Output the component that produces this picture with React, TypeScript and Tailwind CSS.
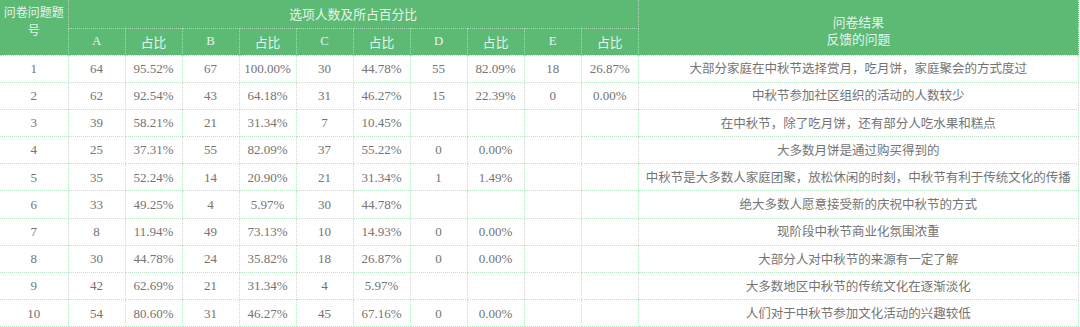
import React from "react";

type Row = { n: string; cells: string[]; text: string };

const rows: Row[] = [
  { n: "1", cells: ["64", "95.52%", "67", "100.00%", "30", "44.78%", "55", "82.09%", "18", "26.87%"], text: "大部分家庭在中秋节选择赏月，吃月饼，家庭聚会的方式度过" },
  { n: "2", cells: ["62", "92.54%", "43", "64.18%", "31", "46.27%", "15", "22.39%", "0", "0.00%"], text: "中秋节参加社区组织的活动的人数较少" },
  { n: "3", cells: ["39", "58.21%", "21", "31.34%", "7", "10.45%", "", "", "", ""], text: "在中秋节，除了吃月饼，还有部分人吃水果和糕点" },
  { n: "4", cells: ["25", "37.31%", "55", "82.09%", "37", "55.22%", "0", "0.00%", "", ""], text: "大多数月饼是通过购买得到的" },
  { n: "5", cells: ["35", "52.24%", "14", "20.90%", "21", "31.34%", "1", "1.49%", "", ""], text: "中秋节是大多数人家庭团聚，放松休闲的时刻，中秋节有利于传统文化的传播" },
  { n: "6", cells: ["33", "49.25%", "4", "5.97%", "30", "44.78%", "", "", "", ""], text: "绝大多数人愿意接受新的庆祝中秋节的方式" },
  { n: "7", cells: ["8", "11.94%", "49", "73.13%", "10", "14.93%", "0", "0.00%", "", ""], text: "现阶段中秋节商业化氛围浓重" },
  { n: "8", cells: ["30", "44.78%", "24", "35.82%", "18", "26.87%", "0", "0.00%", "", ""], text: "大部分人对中秋节的来源有一定了解" },
  { n: "9", cells: ["42", "62.69%", "21", "31.34%", "4", "5.97%", "", "", "", ""], text: "大多数地区中秋节的传统文化在逐渐淡化" },
  { n: "10", cells: ["54", "80.60%", "31", "46.27%", "45", "67.16%", "0", "0.00%", "", ""], text: "人们对于中秋节参加文化活动的兴趣较低" },
];

const sub = ["A", "占比", "B", "占比", "C", "占比", "D", "占比", "E", "占比"];

const cjk = "font-['Noto_Sans_CJK_SC',sans-serif]";
const num = "font-['Liberation_Serif','Noto_Sans_CJK_SC',serif]";

export default function App() {
  return (
    <div className="w-[1080px] h-[327px] overflow-hidden bg-white">
      <table className="table-fixed border-collapse w-[1079px] text-[#747474]">
        <colgroup>
          <col className="w-[68px]" />
          {sub.map((_, i) => (
            <col key={i} className="w-[57px]" />
          ))}
          <col className="w-[440px]" />
        </colgroup>
        <thead className="bg-[#5dba75] text-[#e6f4ea]">
          <tr className="h-[28px]">
            <th
              rowSpan={2}
              className={`${cjk} align-top pt-[3px] px-0 text-[12px] leading-[17.5px] font-normal border-r border-dotted border-[#a6dab3]`}
            >
              <div className="leading-[17.5px]">问卷问题题</div>
              <div className="leading-[17.5px]">号</div>
            </th>
            <th
              colSpan={10}
              className={`${cjk} text-[12.8px] font-normal border-b border-r border-dotted border-[#a6dab3]`}
            >
              选项人数及所占百分比
            </th>
            <th
              rowSpan={2}
              className={`${cjk} text-[12.8px] leading-[17px] font-normal pt-[5px] border-r border-dotted border-[#c4ecce]`}
            >
              问卷结果
              <br />
              反馈的问题
            </th>
          </tr>
          <tr className="h-[27px]">
            {sub.map((s, i) => (
              <th
                key={i}
                className={`${s === "占比" ? cjk : num} text-[12.8px] font-normal border-r border-dotted border-[#a6dab3]`}
              >
                {s}
              </th>
            ))}
          </tr>
        </thead>
        <tbody>
          {rows.map((r) => (
            <tr key={r.n} className="h-[27.2px]">
              <td className={`${num} text-[13px] text-center p-0 border border-dotted border-[#b9e6c4] border-l-0`}>{r.n}</td>
              {r.cells.map((c, i) => (
                <td
                  key={i}
                  className={`${num} text-[13px] text-center p-0 border border-dotted border-[#b9e6c4] tabular-nums`}
                >
                  {c}
                </td>
              ))}
              <td className={`${cjk} text-[12.5px] text-center p-0 whitespace-nowrap border border-dotted border-[#b9e6c4]`}>
                {r.text}
              </td>
            </tr>
          ))}
        </tbody>
      </table>
    </div>
  );
}
